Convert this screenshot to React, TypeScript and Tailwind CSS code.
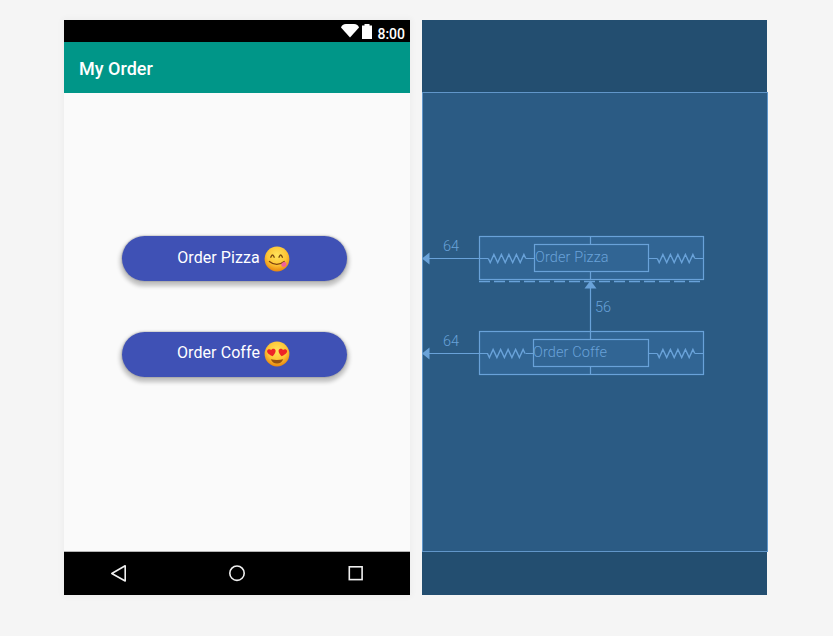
import React from "react";

function zigzag(x: number, y: number): string {
  const pts: string[] = [`${x},${y}`];
  for (let i = 0; i < 5; i++) {
    pts.push(`${(x + 1.9 + i * 7.5).toFixed(2)},${y + 4}`);
    pts.push(`${(x + 5.6 + i * 7.5).toFixed(2)},${y - 4}`);
  }
  pts.push(`${x + 37.5},${y}`);
  return pts.join(" ");
}

function YumEmoji() {
  return (
    <svg viewBox="0 0 26 26" className="h-[26px] w-[26px]">
      <defs>
        <radialGradient id="yum" cx="0.5" cy="0.35" r="0.65">
          <stop offset="0" stopColor="#ffe45c" />
          <stop offset="0.6" stopColor="#fdc535" />
          <stop offset="1" stopColor="#e8860f" />
        </radialGradient>
      </defs>
      <circle cx="13" cy="13" r="12.4" fill="url(#yum)" />
      <path d="M6.8 11.2q1.7-4.4 3.4 0M15 11.2q1.7-4.4 3.4 0" fill="none" stroke="#7d4d10" strokeWidth="1.4" strokeLinecap="round" />
      <path d="M5.4 15.4q7.4 6 14.8 0" fill="none" stroke="#7d4210" strokeWidth="1.3" strokeLinecap="round" />
      <path d="M17.2 18.2q.4-1.7 3.4-2.5q2.4.6 2 2.7q-1 2.8-3.4 2.6q-2.2-.6-2-2.8z" fill="#f0609a" />
    </svg>
  );
}

function HeartEyesEmoji() {
  return (
    <svg viewBox="0 0 26 26" className="h-[26px] w-[26px]">
      <defs>
        <radialGradient id="love" cx="0.5" cy="0.35" r="0.65">
          <stop offset="0" stopColor="#ffe45c" />
          <stop offset="0.6" stopColor="#fdc535" />
          <stop offset="1" stopColor="#e8860f" />
        </radialGradient>
      </defs>
      <circle cx="13" cy="13" r="12.4" fill="url(#love)" />
      <path d="M8.6 15.2C5.8 14 2.8 11.9 3.1 9.9c.3-1.9 3-2.4 4.1-.8 1-1.8 4-1.6 4.4.4.3 1.9-1.5 4.2-3 5.7z" fill="#ee2427" />
      <path d="M17.6 15.2c2.8-1.2 5.8-3.3 5.5-5.3-.3-1.9-3-2.4-4.1-.8-1-1.8-4-1.6-4.4.4-.3 1.9 1.5 4.2 3 5.7z" fill="#ee2427" />
      <path d="M6.8 18.2q6.2 1.4 12.4 0q-1.7 4.2-6.2 4.2t-6.2-4.2z" fill="#955110" />
    </svg>
  );
}

function OrderButton({ label, children }: { label: string; children: React.ReactNode }) {
  return (
    <button className="flex h-[45px] w-[225px] items-center justify-center gap-1 rounded-full bg-[#3f51b5] pr-px text-[16px] text-white shadow-[0_3px_4px_2px_rgba(0,0,0,0.24),0_0_1px_1px_rgba(0,0,0,0.1)]">
      <span className="-mt-[2px] whitespace-pre leading-5 tracking-[0.08px]">{label}</span>
      {children}
    </button>
  );
}

function Phone() {
  return (
    <section className="flex h-[575px] w-[346px] flex-col bg-[#fafafa] shadow-[0_0_6px_2px_rgba(0,0,0,0.03)]">
      <div className="flex h-[22px] shrink-0 items-start justify-end bg-black pr-[5px] text-white">
        <svg viewBox="0 0 18 14" className="mt-1 h-[14px] w-[18px]">
          <path d="M0 3.6Q1-0 5 0H13Q17 0 18 3.6L9 13.6z" fill="white" />
        </svg>
        <svg viewBox="0 0 10 15" className="ml-[3px] mt-1 h-[15px] w-[10px]">
          <path d="M0 1.5h2.5V0h5v1.5H10V15H0z" fill="white" />
        </svg>
        <span className="ml-[5px] mt-[5px] text-[14px] font-medium leading-[18px]">8:00</span>
      </div>
      <header className="flex h-[50.5px] shrink-0 items-center bg-[#009688] pl-[15px] pt-[3px]">
        <h1 className="text-[18px] font-medium leading-6 text-white">My Order</h1>
      </header>
      <main className="flex flex-1 flex-col items-start gap-[50.5px] pl-[57.5px] pt-[143.5px]">
        <OrderButton label="Order Pizza">
          <YumEmoji />
        </OrderButton>
        <OrderButton label="Order Coffe">
          <HeartEyesEmoji />
        </OrderButton>
      </main>
      <nav className="flex h-[44px] shrink-0 items-center border-t border-[#b5b5b5] bg-black">
        <svg viewBox="0 0 346 43" className="h-[43px] w-[346px]" fill="none" stroke="#f0f0f0" strokeWidth="1.6">
          <path d="M47.8 21.5L61.2 13.8V29z" strokeLinejoin="round" />
          <circle cx="173" cy="21.2" r="7.2" />
          <rect x="285.3" y="14.8" width="12.8" height="12.8" />
        </svg>
      </nav>
    </section>
  );
}

function Blueprint() {
  return (
    <section className="flex h-[575px] w-[346px] flex-col">
      <div className="h-[72px] w-[345px] bg-[#234e70]" />
      <div className="relative h-[460px] w-[346px] border border-[#6196c9] bg-[#2b5b84]">
        <svg viewBox="422 92 346 460" className="absolute -left-px -top-px h-[460px] w-[346px]" fill="none" stroke="#69a2d9" strokeWidth="1.2">
          <rect x="479.5" y="236.5" width="224" height="43" fill="#316594" />
          <rect x="534.5" y="244.5" width="114" height="27" />
          <rect x="479.5" y="331.5" width="224" height="43" fill="#316594" />
          <rect x="533.5" y="339.5" width="115" height="27" />
          <path d="M479 281.5H701" strokeDasharray="11 4" strokeWidth="1.4" />
          <path d="M423 258.5H488.3M526 258.5H534M649 258.5H657.3M695 258.5H703" />
          <path d="M423 353.5H488M525.5 353.5H533M649 353.5H657.3M695 353.5H703" />
          <path d="M590.5 236V244M590.5 272V280M590.5 284V339M590.5 367V374" />
          <g strokeWidth="1.4">
            <polyline points={zigzag(488.3, 258.5)} />
            <polyline points={zigzag(657.3, 258.5)} />
            <polyline points={zigzag(487.5, 353.5)} />
            <polyline points={zigzag(657.3, 353.5)} />
          </g>
          <path d="M422 258.5L429.5 252.5V264.5zM422 353.5L429.5 347.5V359.5zM590.5 280.5L584.5 288.5H596.5z" fill="#69a2d9" stroke="none" />
        </svg>
        <div className="absolute inset-0 text-[14.5px] font-light leading-5 text-[#69a2d9]">
          <span className="absolute left-[20px] top-[144px]">64</span>
          <span className="absolute left-[20px] top-[239px]">64</span>
          <span className="absolute left-[172px] top-[205px]">56</span>
          <span className="absolute left-[112px] top-[155px] whitespace-nowrap tracking-[0.1px]">Order Pizza</span>
          <span className="absolute left-[110px] top-[250px] whitespace-nowrap tracking-[0.1px]">Order Coffe</span>
        </div>
      </div>
      <div className="h-[43px] w-[345px] bg-[#234e70]" />
    </section>
  );
}

export default function App() {
  return (
    <div className="flex h-[636px] w-[833px] items-start gap-3 overflow-hidden bg-[#f5f5f5] pl-16 pt-5 font-['Roboto','Liberation_Sans',sans-serif]">
      <Phone />
      <Blueprint />
    </div>
  );
}
